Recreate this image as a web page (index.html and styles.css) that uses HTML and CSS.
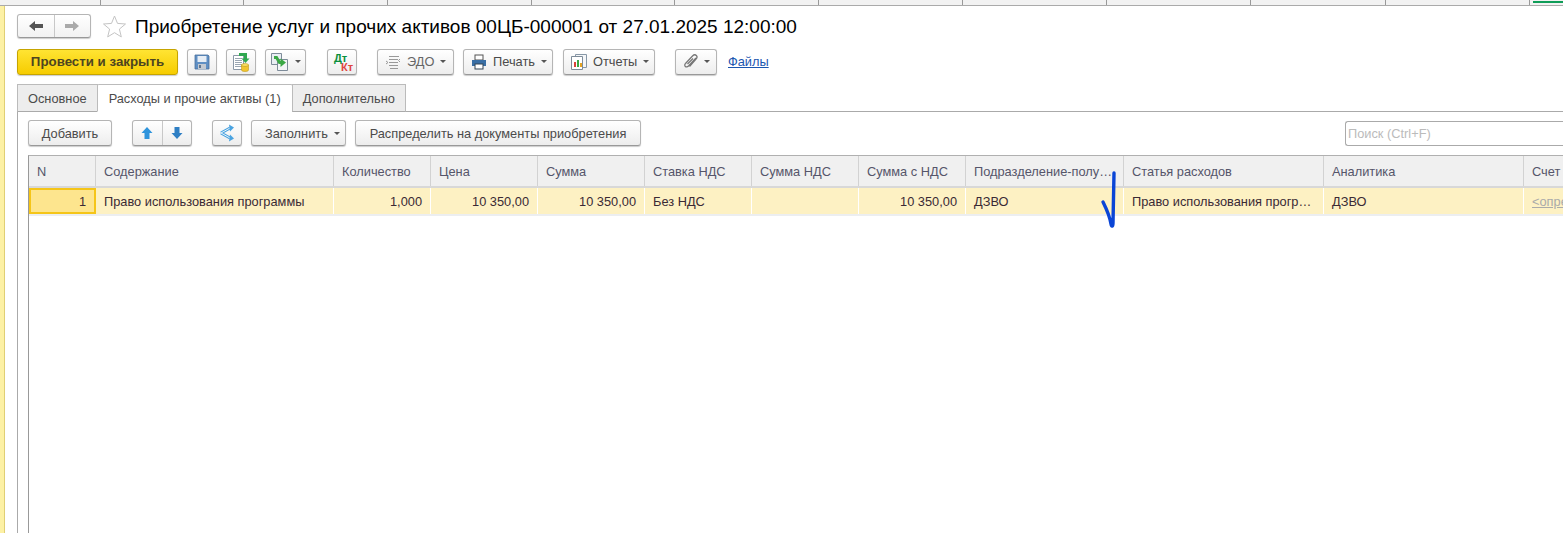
FILE: index.html
```html
<!DOCTYPE html>
<html lang="ru">
<head>
<meta charset="utf-8">
<title>Приобретение услуг и прочих активов</title>
<link rel="stylesheet" href="styles.css">
</head>
<body>
<div class="topstrip">
  <span class="tab-stub w100"></span><span class="tab-stub w143"></span><span class="tab-stub w144"></span><span class="tab-stub w144"></span><span class="tab-stub w143"></span><span class="tab-stub w144"></span><span class="tab-stub w144"></span><span class="tab-stub w144"></span><span class="tab-stub w144"></span><span class="tab-stub w135"></span><span class="tab-stub w144"></span>
  <span class="tab-active"></span>
</div>
<div class="shell">
  <div class="sidebar"></div>
  <main class="main">
    <div class="titlebar">
      <div class="navpair">
        <button class="navbtn"><svg width="16" height="12" viewBox="0 0 16 12"><path d="M1 6 7 1v3h8v4H7v3z" fill="#555"/></svg></button>
        <button class="navbtn"><svg width="16" height="12" viewBox="0 0 16 12"><path d="M15 6 9 1v3H1v4h8v3z" fill="#aaa"/></svg></button>
      </div>
      <svg class="star" width="25" height="25" viewBox="0 0 25 25"><path d="M12.5 2l3 7.400 8 .6-6.100 5.100 1.900 7.800-6.800-4.200-6.800 4.200 1.900-7.800L1.500 10l8-.6z" fill="#fff" stroke="#c4c4c4"/></svg>
      <h1 class="title">Приобретение услуг и прочих активов 00ЦБ-000001 от 27.01.2025 12:00:00</h1>
    </div>

    <div class="cmdbar">
      <button class="btn primary">Провести и закрыть</button>
      <button class="btn icon m9">
        <svg width="16" height="16" viewBox="0 0 16 16"><path d="M1 1h13l1 1v13H1z" fill="#5f8fc4" stroke="#4a6f9c" stroke-width=".8"/><rect x="3.500" y="2" width="9" height="6" fill="#e6edf5"/><rect x="4" y="10" width="8" height="5" fill="#c3c9d1"/><rect x="5" y="11" width="2" height="3" fill="#5f7590"/></svg>
      </button>
      <button class="btn icon m9">
        <svg width="20" height="20" viewBox="0 0 20 20"><path d="M2.500 3.500h10v14h-10z" fill="#fff" stroke="#8a98a6"/><path d="M4 6.500h7M4 8.500h7M4 10.500h7M4 12.500h7M4 14.500h7" stroke="#9aa6b2"/><path d="M8 2.500h6.500V7" fill="none" stroke="#2fa84f" stroke-width="3"/><path d="M10.500 6.500h8l-4 4.500z" fill="#2fa84f"/><path d="M10.500 13v5c0 2 7 2 7 0v-5z" fill="#f2c530" stroke="#b58f10" stroke-width=".5"/><ellipse cx="14" cy="13" rx="3.500" ry="1.500" fill="#f8dc63" stroke="#b58f10" stroke-width=".5"/></svg>
      </button>
      <button class="btn iconmenu m9">
        <svg width="20" height="20" viewBox="0 0 20 20"><path d="M1.500 1.500h10v11h-10z" fill="#e9eef3" stroke="#7d8b99"/><path d="M7.500 7.500h10v11h-10z" fill="#f3f5f7" stroke="#7d8b99"/><path d="M4 5.500h2.500l3 5h2" fill="none" stroke="#3aa845" stroke-width="3"/><path d="M10.500 6.500l5.500 4-5.500 4.500z" fill="#3aa845"/></svg>
        <i class="caret"></i>
      </button>
      <button class="btn icon dtkt"><span class="dt">Дт</span><span class="kt">Кт</span></button>
      <button class="btn withicon edo">
        <svg width="16" height="16" viewBox="0 0 16 16" fill="none" stroke="#999"><path d="M4 2.500h10M4 5.500h9M4 8.500h9M4 11.500h9M5 14.500h8M1 7l2 1.500L1 10M15 5l-1.500 1.500L15 8"/></svg>ЭДО<i class="caret"></i>
      </button>
      <button class="btn withicon print">
        <svg width="16" height="16" viewBox="0 0 16 16"><rect x="4" y="1" width="8" height="5" fill="#fff" stroke="#555"/><path d="M1 6h14v6H1z" fill="#3a6fa5"/><rect x="4" y="10" width="8" height="5" fill="#fff" stroke="#345"/></svg>Печать<i class="caret"></i>
      </button>
      <button class="btn withicon reports">
        <svg width="16" height="18" viewBox="0 0 16 18"><path d="M4.500 1.500h11v13h-11z" fill="#f4f6f8" stroke="#8797a6"/><path d="M.5 3.500h11v13H.5z" fill="#fff" stroke="#7d8b99"/><rect x="3" y="9" width="2" height="5" fill="#d9433a"/><rect x="6" y="7" width="2" height="7" fill="#3aa845"/><rect x="9" y="10" width="2" height="4" fill="#e5a321"/></svg>Отчеты<i class="caret"></i>
      </button>
      <button class="btn iconmenu clip">
        <svg width="16" height="18" viewBox="0 0 16 18" fill="none" stroke="#777" stroke-width="1.300"><path d="M13 5 5.500 13c-2.500 2.500-5-.5-3-2.500l7-7.500c3-3 6 .5 3.500 3L6.500 13.500"/><path d="M10 5.500 4.500 11"/></svg>
        <i class="caret"></i>
      </button>
      <a class="link" href="#">Файлы</a>
    </div>

    <div class="tabs">
      <div class="tab">Основное</div>
      <div class="tab selected">Расходы и прочие активы (1)</div>
      <div class="tab">Дополнительно</div>
    </div>

    <section class="panel">
      <div class="gridbar">
        <button class="btn text add">Добавить</button>
        <div class="pair">
          <button class="pairbtn"><svg width="12" height="14" viewBox="0 0 12 14"><path d="M6 1l5.500 6H8.500v6h-5V7H.5z" fill="#2f94dc"/></svg></button>
          <button class="pairbtn"><svg width="12" height="14" viewBox="0 0 12 14"><path d="M6 13l5.500-6H8.500V1h-5v6H.5z" fill="#2f7fc4"/></svg></button>
        </div>
        <button class="btn icon m16b">
          <svg width="16" height="18" viewBox="0 0 16 18" fill="none"><path d="M2 9 11 4M2 9l9 5" stroke="#4aa3e0" stroke-width="3"/><path d="M2 9 11 4M2 9l9 5" stroke="#e6f3fb" stroke-width="1"/><path d="M10 .5l5 3-4 4zM10 17.500l5-3-4-4z" fill="#4aa3e0"/></svg>
        </button>
        <button class="btn fill">Заполнить<i class="caret"></i></button>
        <button class="btn text dist">Распределить на документы приобретения</button>
        <div class="search">Поиск (Ctrl+F)</div>
      </div>

      <div class="grid">
        <div class="row head">
          <div class="cell">N</div>
          <div class="cell">Содержание</div>
          <div class="cell">Количество</div>
          <div class="cell">Цена</div>
          <div class="cell">Сумма</div>
          <div class="cell">Ставка НДС</div>
          <div class="cell">Сумма НДС</div>
          <div class="cell">Сумма с НДС</div>
          <div class="cell">Подразделение-полу…</div>
          <div class="cell">Статья расходов</div>
          <div class="cell">Аналитика</div>
          <div class="cell">Счет</div>
        </div>
        <div class="row data">
          <div class="cell num current">1</div>
          <div class="cell">Право использования программы</div>
          <div class="cell num">1,000</div>
          <div class="cell num">10 350,00</div>
          <div class="cell num">10 350,00</div>
          <div class="cell">Без НДС</div>
          <div class="cell"></div>
          <div class="cell num">10 350,00</div>
          <div class="cell">ДЗВО</div>
          <div class="cell">Право использования прогр…</div>
          <div class="cell">ДЗВО</div>
          <div class="cell muted">&lt;определить&gt;</div>
        </div>
      </div>
    </section>
  </main>
</div>
<svg class="pen" width="24" height="66" viewBox="0 0 24 66" fill="none"><path d="M3 34C6 40 10 50 11 56c.5 3 2 3 2-1L14 5" stroke="#0a45d6" stroke-width="3.400" stroke-linecap="round" stroke-linejoin="round"/></svg>
</body>
</html>
```
FILE: styles.css
```css
* { box-sizing: border-box; }
html, body { margin: 0; height: 533px; overflow: hidden; background: #fff; }
body { font-family: "Liberation Sans", Arial, sans-serif; font-size: 12.800px; color: #4b4b4b; position: relative; }
button { font: inherit; color: inherit; margin: 0; }

.topstrip { display: flex; height: 6px; background: #f2f2f2; border-bottom: 1px solid #aaa; position: relative; }
.tab-stub { display: block; height: 5px; border-right: 1px solid #999; }
.w100 { width: 101px; } .w143 { width: 143px; } .w144 { width: 144px; } .w135 { width: 135px; }
.tab-active { flex: 1; margin: 1px 0 0 3px; height: 2px; background: #0f9d58; }

.shell { display: flex; height: 527px; }
.sidebar { width: 5px; background: #fdf1a5; border-right: 1px solid #e0cf74; flex: none; }
.main { flex: 1; min-width: 0; display: flex; flex-direction: column; padding-left: 12px; }

.titlebar { display: flex; align-items: center; height: 28px; margin-top: 6px; }
.navpair { display: flex; width: 74px; height: 24px; border: 1px solid #b5b5b5; border-bottom-color: #999; border-radius: 3px; background: linear-gradient(#fff, #f2f2f2); box-shadow: 0 1px 1px #ccc; }
.navbtn { flex: 1; border: 0; background: none; padding: 0; display: flex; align-items: center; justify-content: center; }
.navbtn + .navbtn { border-left: 1px solid #c8c8c8; }
.star { margin-left: 11px; }
.title { margin: 2px 0 0 8px; font-size: 19px; font-weight: 400; color: #000; white-space: nowrap; }

.cmdbar { display: flex; align-items: center; height: 27px; margin-top: 8px; }
.btn { height: 26px; border: 1px solid #b5b5b5; border-bottom-color: #999; border-radius: 3px; background: linear-gradient(#fff, #ededed); box-shadow: 0 1px 1px #ccc; padding: 0; display: inline-flex; align-items: center; justify-content: center; white-space: nowrap; flex: none; }
.primary { width: 161px; background: linear-gradient(#ffe433, #f6cc00); border-color: #c6a400; color: #4d4520; font-weight: 700; font-size: 13.300px; }
.icon { width: 30px; }
.m9 { margin-left: 9px; }
.iconmenu { width: 41px; gap: 5px; }
.dtkt { margin-left: 21px; position: relative; font-size: 11px; font-weight: 700; }
.dt { color: #0a8f3c; position: absolute; left: 6px; top: 4px; line-height: 9px; }
.kt { color: #e0453f; position: absolute; left: 13px; top: 13px; line-height: 9px; }
.withicon { padding: 0 0 0 7px; gap: 6px; justify-content: flex-start; }
.edo { margin-left: 20px; width: 77px; color: #666; }
.print { margin-left: 9px; width: 90px; }
.reports { margin-left: 10px; width: 92px; }
.clip { margin-left: 20px; width: 42px; }
.caret { display: inline-block; width: 0; height: 0; border: 3px solid transparent; border-top: 3px solid #555; border-bottom: 0; }
.link { margin-left: 11px; color: #1a56b0; text-decoration: underline; }

.tabs { display: flex; height: 28px; margin-top: 9px; margin-bottom: -1px; position: relative; z-index: 1; }
.tab { height: 28px; padding: 0 10px; display: flex; align-items: center; background: #ededed; border: 1px solid #bbb; border-bottom-color: #aaa; }
.tab + .tab { margin-left: -1px; }
.tab.selected { background: #fff; border-bottom-color: #fff; border-radius: 2px 2px 0 0; padding: 0 11px; }

.panel { flex: 1; min-height: 0; border-left: 1px solid #aaa; border-top: 1px solid #aaa; padding-left: 10px; display: flex; flex-direction: column; }
.gridbar { display: flex; align-items: center; height: 26px; margin-top: 8px; }
.text { padding: 0 13px; }
.add { width: 84px; }
.pair { display: flex; margin-left: 20px; width: 60px; height: 26px; border: 1px solid #b5b5b5; border-bottom-color: #999; border-radius: 3px; background: linear-gradient(#fff, #ededed); box-shadow: 0 1px 1px #ccc; }
.pairbtn { flex: 1; border: 0; background: none; padding: 0; display: flex; align-items: center; justify-content: center; }
.pairbtn + .pairbtn { border-left: 1px solid #c8c8c8; }
.m16b { margin-left: 20px; }
.fill { margin-left: 9px; width: 95px; justify-content: flex-start; padding-left: 13px; gap: 6px; }
.dist { margin-left: 9px; width: 286px; }
.search { margin-left: auto; width: 218px; height: 25px; flex: none; border: 1px solid #aaa; border-right: 0; border-radius: 3px 0 0 3px; color: #bbb; padding: 0 2px; display: flex; align-items: center; }

.grid { margin-top: 9px; flex: 1; border-left: 1px solid #999; border-top: 1px solid #b0b0b0; min-width: 0; overflow: hidden; }
.row { display: grid; grid-template-columns: 67px 238px 97px 107px 107px 107px 107px 107px 158px 200px 200px 60px; }
.cell { display: flex; align-items: center; padding: 0 8px; white-space: nowrap; overflow: hidden; border-right: 1px solid #d2d2d2; }
.head { height: 32px; border-bottom: 2px solid #d8d8d8; }
.head .cell { background: #f0f0f0; color: #55556a; }
.data { height: 28px; border-bottom: 2px solid #eceef0; }
.data .cell { background: #fdf1c3; color: #3a2a35; border-right: 1px solid #fff; }
.num { justify-content: flex-end; }
.data .current { background: #fde58e; border: 2px solid #f5c518; }
.data .muted { color: #aaa; text-decoration: underline; }

.pen { position: absolute; left: 1100px; top: 168px; }
```
